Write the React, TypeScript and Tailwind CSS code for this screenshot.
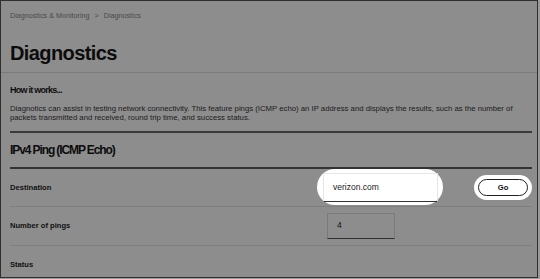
import React from "react";

const rows = ["Destination", "Number of pings", "Status"];

export default function App() {
  return (
    <div className="w-[540px] h-[279px] bg-[#9a9a9a] overflow-hidden" style={{ fontFamily: '"Liberation Sans", Arial, sans-serif' }}>
      <div className="w-[538px] h-[278px] border border-[#2f2f2f] bg-[#8d8d8d] overflow-hidden">
        <div className="px-[9px] pt-[10px] h-[24px] text-[7.2px] leading-[10px] text-[#4a4a4a] flex gap-[5px]">
          <span>Diagnostics &amp; Monitoring</span>
          <span>&gt;</span>
          <span>Diagnostics</span>
        </div>
        <h1 className="px-[9px] pt-[16px] h-[47px] text-[20px] leading-[24px] font-bold tracking-[-0.6px] text-[#0c0c0c]">
          Diagnostics
        </h1>
        <div className="border-t border-[#7b7b7b]" />
        <div className="pl-[9px] pr-[5px] flex flex-col">
          <h2 className="pt-[11px] h-[31px] shrink-0 text-[9px] leading-[12px] font-bold tracking-[-0.75px] text-[#0f0f0f]">
            How it works...
          </h2>
          <p className="text-[7.75px] leading-[9px] text-[#1c1c1c] h-[27px] shrink-0 pr-[10px]">
            Diagnotics can assist in testing network connectivity. This feature pings (ICMP echo) an IP address and displays the results, such as the number of packets transmitted and received, round trip time, and success status.
          </p>
          <div className="h-[2px] shrink-0 bg-[#3a3a3a]" />
          <h2 className="h-[34px] shrink-0 flex items-center text-[12px] font-bold tracking-[-1.1px] text-[#0c0c0c]">
            IPv4 Ping (ICMP Echo)
          </h2>
          <div className="h-[1.5px] shrink-0 bg-[#333333]" />
          {rows.map((label, i) => (
            <div key={label} className={`flex shrink-0 items-center h-[38.5px] ${i < 2 ? "border-b border-[#7f7f7f]" : ""}`}>
              <span className="w-[311px] text-[7.6px] font-bold text-[#111]">{label}</span>
              {i === 0 && (
                <>
                  <div className="bg-white rounded-[18px] pl-[6px] pr-[5px] pt-[4px] pb-[3px]">
                    <div className="w-[115px] h-[29px] border border-[#e6e6e6] border-b-[#333] flex items-center pl-[9px] text-[8.5px] text-[#222]">
                      verizon.com
                    </div>
                  </div>
                  <div className="ml-[31px] bg-white rounded-full p-[4px]">
                    <button className="w-[50px] h-[17px] rounded-full border border-[#222] bg-white text-[7.6px] font-bold text-[#111] flex items-center justify-center">
                      Go
                    </button>
                  </div>
                </>
              )}
              {i === 1 && (
                <div className="ml-[6px] w-[68px] h-[26px] border border-[#7a7a7a] border-b-[#2f2f2f] flex items-center pl-[9px] text-[8.5px] text-[#111]">
                  4
                </div>
              )}
            </div>
          ))}
        </div>
      </div>
    </div>
  );
}
